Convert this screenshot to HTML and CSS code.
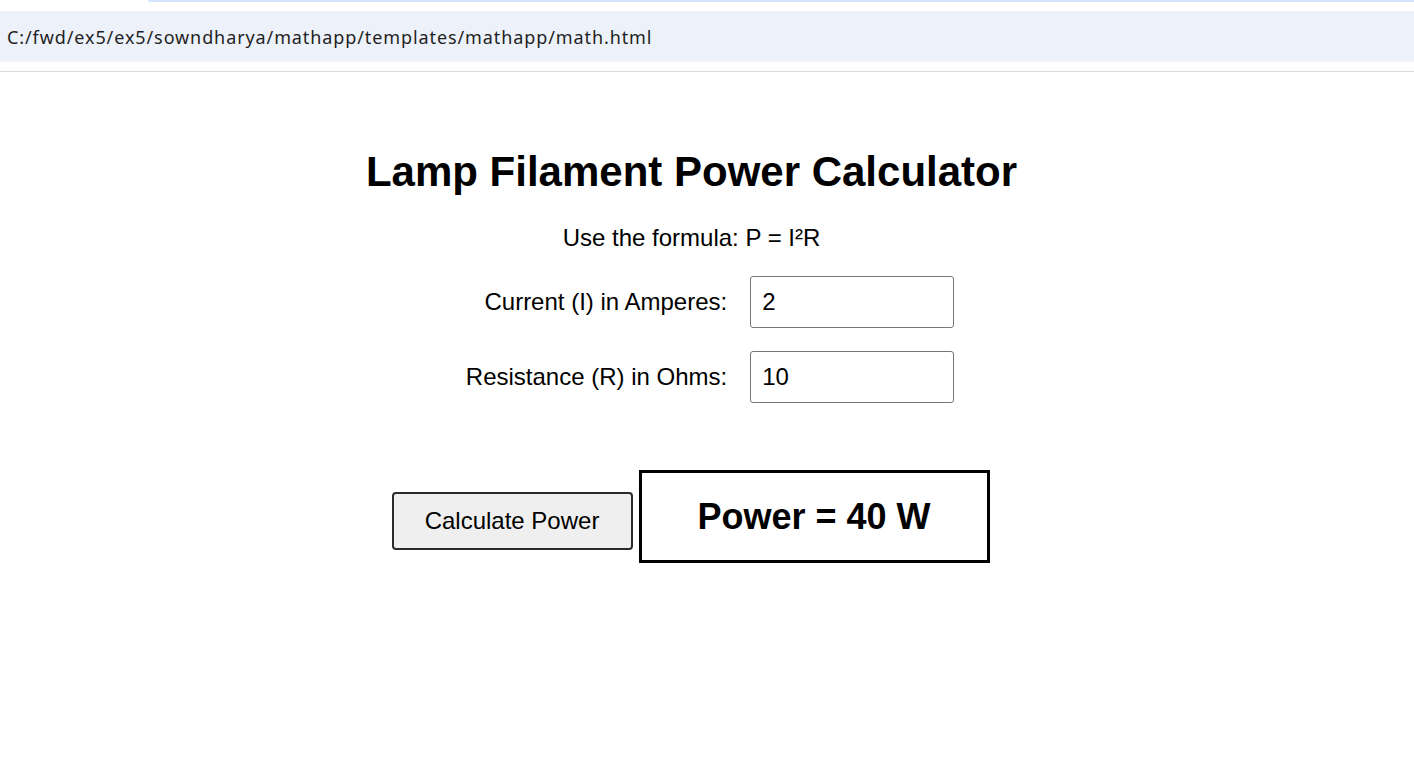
FILE: index.html
```html
<!DOCTYPE html>
<html lang="en">
<head>
<meta charset="utf-8">
<title>Lamp Filament Power Calculator</title>
<link rel="stylesheet" href="styles.css">
</head>
<body>
<header class="chrome">
  <div class="tabstrip"><div class="tab-edge"></div></div>
  <div class="addressbar"><span class="url">C:/fwd/ex5/ex5/sowndharya/mathapp/templates/mathapp/math.html</span></div>
  <div class="chrome-gap"></div>
</header>
<main class="page">
  <h1 class="title">Lamp Filament Power Calculator</h1>
  <p class="formula">Use the formula: P = I²R</p>
  <div class="form-wrap">
    <form class="form">
      <label class="label" for="current">Current (I) in Amperes:</label>
      <input class="field" id="current" type="text" value="2">
      <label class="label" for="resistance">Resistance (R) in Ohms:</label>
      <input class="field" id="resistance" type="text" value="10">
    </form>
  </div>
  <div class="actions">
    <button class="btn" type="button">Calculate Power</button>
    <div class="result">Power = 40 W</div>
  </div>
</main>
</body>
</html>
```

FILE: styles.css
```css
html, body {
  margin: 0;
  padding: 0;
  background: #ffffff;
}

body {
  font-family: "Liberation Sans", Arial, sans-serif;
  color: #000;
}

.chrome {
  display: flex;
  flex-direction: column;
}

.tabstrip {
  height: 11px;
  display: flex;
}

.tab-edge {
  margin-left: 148px;
  flex: 1;
  height: 2px;
  background: #d3e3fd;
  border-bottom-left-radius: 3px;
}

.addressbar {
  height: 51px;
  background: #edf1fa;
  display: flex;
  align-items: center;
  padding-left: 7px;
}

.url {
  font-family: "Noto Sans", "Open Sans", sans-serif;
  font-size: 18px;
  color: #1f1f1f;
  letter-spacing: 0.9px;
}

.chrome-gap {
  height: 9px;
  border-bottom: 1px solid #dadce0;
}

.page {
  padding-right: 33px;
  display: flex;
  flex-direction: column;
  align-items: center;
}

.title {
  margin: 76px 0 0 2px;
  font-size: 42px;
  line-height: 48px;
  font-weight: bold;
}

.formula {
  margin: 28px 0 0 2px;
  font-size: 24px;
  line-height: 28px;
}

.form-wrap {
  margin-top: 24px;
  display: flex;
  justify-content: center;
  align-self: stretch;
}

.form {
  margin: 0 0 0 39px;
  display: grid;
  grid-template-columns: auto 204px;
  column-gap: 23px;
  row-gap: 23px;
  align-items: center;
}

.label {
  font-size: 24px;
  text-align: right;
}

.field {
  box-sizing: border-box;
  width: 204px;
  height: 52px;
  border: 1px solid #767676;
  border-radius: 3px;
  padding: 0 11px;
  font-family: "Liberation Sans", Arial, sans-serif;
  font-size: 24px;
  color: #000;
  background: #fff;
}

.actions {
  margin-top: 67px;
  display: flex;
  align-items: baseline;
  gap: 6px;
}

.btn {
  box-sizing: border-box;
  width: 241px;
  height: 58px;
  border: 2px solid #2b2b2b;
  border-radius: 4px;
  background: #efefef;
  font-family: "Liberation Sans", Arial, sans-serif;
  font-size: 24px;
  color: #000;
  padding: 0;
}

.result {
  box-sizing: border-box;
  width: 351px;
  height: 93px;
  border: 3px solid #000;
  display: flex;
  align-items: center;
  justify-content: center;
  font-size: 36px;
  font-weight: bold;
}
```
